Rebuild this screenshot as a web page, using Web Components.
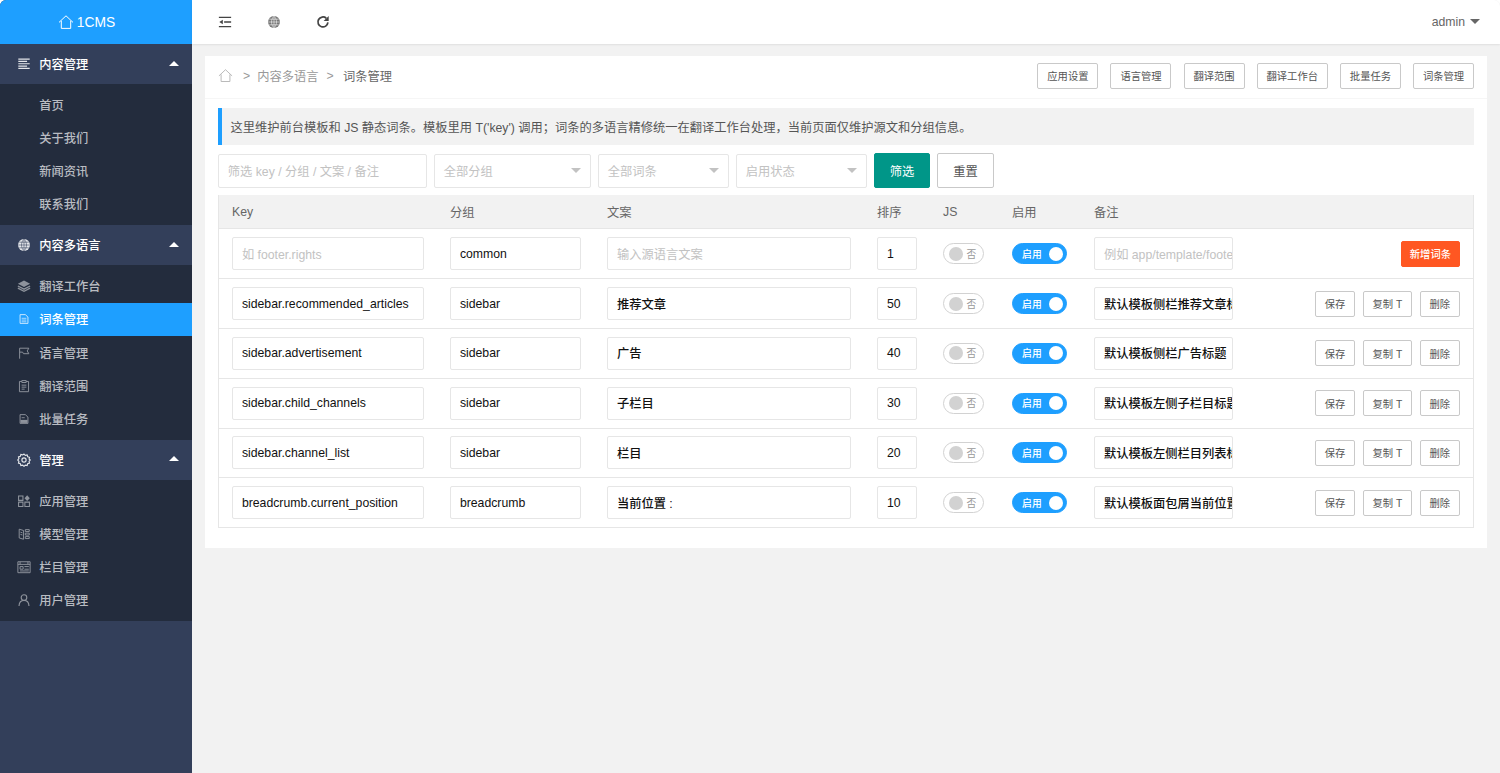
<!DOCTYPE html>
<html lang="zh">
<head>
<meta charset="utf-8">
<title>词条管理</title>
<style>
  html, body { margin: 0; height: 100%; background: #fff; }
  body {
    font-family: "Liberation Sans", "Noto Sans CJK SC", sans-serif;
    font-size: 12.25px;
    color: #666;
    overflow: hidden;
  }
</style>
</head>
<body>
<admin-app></admin-app>

<script>
const ICONS = {
  home: '<path d="M1 8.400 8 1.800l7 6.600M3.300 6.800v7.600h9.400V6.800" fill="none" stroke="currentColor" stroke-width="1"/>',
  lines: '<path d="M1.500 2.300h13M1.500 5h10M1.500 7.700h13M1.500 10.400h10M1.500 13.100h13" fill="none" stroke="currentColor" stroke-width="1.400"/>',
  globe: '<circle cx="8" cy="8" r="6.800" fill="currentColor"/><path d="M1.500 8h13M8 1.500v13M2.600 4.800h10.800M2.600 11.200h10.800M8 1.500c-3.800 3-3.800 10 0 13M8 1.500c3.800 3 3.800 10 0 13" fill="none" stroke="var(--grid, #fff)" stroke-opacity=".8" stroke-width=".8"/>',
  layers: '<path d="M8 1.800 15 5.400 8 9 1 5.400z" fill="currentColor"/><path d="M1 8 8 11.600 15 8M1 10.500 8 14.100l7-3.600" fill="none" stroke="currentColor" stroke-width="1.500"/>',
  doc: '<path d="M3.500 3h6l3 2.800V13h-9z" fill="none" stroke="currentColor" stroke-width="1.100"/><path d="M5.300 7.200h5.400M5.300 9.200h5.400M5.300 11.200h5.400" stroke="currentColor" stroke-width=".9"/>',
  batch: '<path d="M3.500 3h6l3 2.800V13h-9z" fill="none" stroke="currentColor" stroke-width="1.100"/><path d="M4 9h8v3.500H4z" fill="currentColor"/><path d="M5.300 6.500h3.500" stroke="currentColor" stroke-width="1"/>',
  flag: '<path d="M3 14.500V2.500h10.500L11.700 5.600l1.800 3.200H7.400L6.400 7H3" fill="none" stroke="currentColor" stroke-width="1.100"/>',
  clip: '<path d="M5.500 2.800H2.800v11.700h10.400V2.800h-2.700M5.500 1.800h5v2.200h-5zM5.300 7h5.400M5.300 9.300h5.400M5.300 11.600h3.400" fill="none" stroke="currentColor" stroke-width="1.100"/>',
  gear: '<circle cx="8" cy="8" r="2.400" fill="none" stroke="currentColor" stroke-width="1.300"/><path d="M8 1.200l1.500 1.500 2.100-.5.600 2.100 2.100.6-.5 2.100L15.200 8l-1.400 1.500.5 2.100-2.100.6-.6 2.100-2.100-.5L8 15.200l-1.500-1.400-2.100.5-.6-2.100-2.100-.6.500-2.100L.8 8l1.400-1.500-.5-2.100 2.100-.6.600-2.100 2.100.5z" fill="none" stroke="currentColor" stroke-width="1.300"/>',
  apps: '<path d="M1.800 2.300h5v5h-5zM1.800 9.300h5v5h-5zM9 9.300h5.200v5H9z" fill="none" stroke="currentColor" stroke-width="1.200"/><path d="M11.600 1.500 14.600 4.800l-3 3.300-3-3.300z" fill="currentColor"/>',
  model: '<path d="M2.500 2.500 7.500 4v10L2.500 12.500zM9.500 3h4.500v2.200H9.500zM9.500 7h4.500v2.200H9.500zM9.500 11h4.500v2.200H9.500zM4 6l2.200.600M4 8.500l2.200.600" fill="none" stroke="currentColor" stroke-width="1.100"/>',
  board: '<path d="M1 2h14v12.500H1zM1 5h14M3.500 7.500h3.500v3H3.500zM8.500 7.500h5M8.500 10.500h5M3.500 12.500h10M3.500 2v3M12.500 2v3" fill="none" stroke="currentColor" stroke-width="1.100"/>',
  user: '<circle cx="8" cy="5.200" r="3.200" fill="none" stroke="currentColor" stroke-width="1.300"/><path d="M2.300 14.800c.2-3.800 2.600-6.400 5.700-6.400s5.500 2.600 5.700 6.400" fill="none" stroke="currentColor" stroke-width="1.300"/>',
  shrink: '<path d="M1 2.800h14M7 8h8M1 13.200h14" fill="none" stroke="currentColor" stroke-width="1.500"/><path d="M5.500 5.300v5.400L1.500 8z" fill="currentColor"/>',
  refresh: '<path d="M13.600 8.500A5.700 5.700 0 1 1 11.700 3.700" fill="none" stroke="currentColor" stroke-width="2"/><path d="M14.500 1v5.800H8.700z" fill="currentColor"/>'
};

const icon = (name, size) =>
  `<svg viewBox="0 0 16 16" width="${size}" height="${size}" aria-hidden="true">${ICONS[name]}</svg>`;

class NavItem extends HTMLElement {
  connectedCallback() {
    const ic = this.getAttribute('icon');
    this.attachShadow({ mode: 'open' }).innerHTML = `
      <style>
        :host {
          display: flex;
          align-items: center;
          height: 33.2px;
          padding-left: 17px;
          color: #b9bcc2;
          font-size: 12.25px;
          font-weight: 500;
        }
        :host([active]) { background: #1e9fff; color: #fff; }
        .ic { width: 14px; height: 14px; margin-right: 8.2px; display: flex; color: #8e939c; }
        :host([active]) .ic { color: #cfe9ff; }
        svg { display: block; }
      </style>
      <span class="ic">${ic ? icon(ic, 14) : ''}</span><slot></slot>`;
  }
}
customElements.define('nav-item', NavItem);

class NavGroup extends HTMLElement {
  connectedCallback() {
    this.attachShadow({ mode: 'open' }).innerHTML = `
      <style>
        :host { display: block; --grid: #333f5a; }
        .head {
          display: flex;
          align-items: center;
          height: 40px;
          padding: 0 13px 0 17px;
          color: #fff;
          font-weight: 500;
          background: #333f5a;
        }
        .ic { width: 14px; height: 14px; margin-right: 8.2px; display: flex; color: #e4e6ea; }
        .title { flex: 1; }
        .caret {
          width: 0; height: 0;
          border: 5.6px solid transparent;
          border-top: 0;
          border-bottom: 5.6px solid #fff;
          margin-top: -2px;
        }
        .list { background: #232c3d; padding: 4.3px 0; }
      </style>
      <div class="head">
        <span class="ic">${icon(this.getAttribute('icon'), 14)}</span>
        <span class="title">${this.getAttribute('label')}</span>
        <span class="caret"></span>
      </div>
      <div class="list"><slot></slot></div>`;
  }
}
customElements.define('nav-group', NavGroup);

class SideBar extends HTMLElement {
  connectedCallback() {
    this.attachShadow({ mode: 'open' }).innerHTML = `
      <style>
        :host {
          display: flex;
          flex-direction: column;
          flex: none;
          width: 192px;
          background: #333f5a;
          border-top-left-radius: 6px;
          overflow: hidden;
        }
        .logo {
          display: flex;
          align-items: center;
          justify-content: center;
          gap: 3px;
          height: 44px;
          flex: none;
          padding-right: 19px;
          box-sizing: border-box;
          background: #1e9fff;
          color: #fff;
          font-size: 13.8px;
        }
      </style>
      <div class="logo">${icon('home', 16)}<span>1CMS</span></div>
      <slot></slot>`;
  }
}
customElements.define('side-bar', SideBar);

class TopBar extends HTMLElement {
  connectedCallback() {
    this.attachShadow({ mode: 'open' }).innerHTML = `
      <style>
        :host {
          display: flex;
          align-items: center;
          flex: none;
          height: 44px;
          padding: 0 20px 0 25.5px;
          background: #fff;
          box-sizing: border-box;
          box-shadow: 0 1px 2px rgba(0,0,0,.08);
          color: #444;
          border-top-right-radius: 6px;
        }
        .tools { display: flex; gap: 35px; flex: 1; }
        .tools svg { display: block; }
        .tools .g { color: #777; }
        .user { display: flex; align-items: center; gap: 5px; color: #666; }
        .caret { width: 0; height: 0; border: 5px solid transparent; border-bottom: 0; border-top: 5px solid #666; margin-top: -2px; }
      </style>
      <div class="tools">${icon('shrink', 14)}<span class="g">${icon('globe', 14)}</span>${icon('refresh', 14)}</div>
      <div class="user"><span>admin</span><span class="caret"></span></div>`;
  }
}
customElements.define('top-bar', TopBar);

class UiButton extends HTMLElement {
  connectedCallback() {
    this.attachShadow({ mode: 'open' }).innerHTML = `
      <style>
        :host {
          display: inline-flex;
          align-items: center;
          justify-content: center;
          box-sizing: border-box;
          height: 26px;
          padding: 0 8.9px;
          background: #fff;
          border: 1px solid #c9c9c9;
          border-radius: 2px;
          color: #555;
          font-size: 10.3px;
          white-space: nowrap;
          flex: none;
        }
        :host([kind="primary"]) {
          height: 35px; width: 56px; padding: 0;
          background: #009688; border-color: #009688; color: #fff; font-size: 12.25px;
        }
        :host([kind="big"]) { height: 35px; width: 57px; padding: 0; font-size: 12.25px; }
        :host([kind="add"]) { width: 59px; padding: 0; background: #ff5722; border-color: #ff5722; color: #fff; font-weight: 500; }
      </style>
      <slot></slot>`;
  }
}
customElements.define('ui-button', UiButton);

class UiField extends HTMLElement {
  connectedCallback() {
    const ph = this.hasAttribute('placeholder');
    this.attachShadow({ mode: 'open' }).innerHTML = `
      <style>
        :host {
          display: flex;
          align-items: center;
          box-sizing: border-box;
          height: 33px;
          padding-left: 8.8px;
          background: #fff;
          border: 1px solid #e6e6e6;
          border-radius: 2px;
          color: ${ph ? '#c2c2c2' : '#111'};
          font-weight: ${ph ? 400 : 500};
          font-size: 12.25px;
          overflow: hidden;
          white-space: nowrap;
          flex: none;
          position: relative;
        }
        .caret {
          position: absolute; right: 9px; top: 13px;
          width: 0; height: 0;
          border: 5.6px solid transparent; border-bottom: 0; border-top: 5.6px solid #c2c2c2;
        }
      </style>
      <slot></slot>${this.hasAttribute('select') ? '<span class="caret"></span>' : ''}`;
  }
}
customElements.define('ui-field', UiField);

class UiSwitch extends HTMLElement {
  connectedCallback() {
    const on = this.hasAttribute('on');
    this.attachShadow({ mode: 'open' }).innerHTML = `
      <style>
        :host {
          display: inline-flex;
          align-items: center;
          box-sizing: border-box;
          height: 21px;
          border-radius: 11px;
          font-size: 9.8px;
          width: ${on ? '55px' : '41px'};
          padding: 0 3.5px 0 4.5px;
          ${on ? 'background:#1e9fff;border:1px solid #1e9fff;color:#fff;padding-left:9px;justify-content:space-between;font-weight:500;'
               : 'background:#fff;border:1px solid #d2d2d2;color:#999;gap:4px;'}
        }
        i { width: 14px; height: 14px; border-radius: 50%; background: ${on ? '#fff' : '#d2d2d2'}; flex: none; }
      </style>
      ${on ? '<span>启用</span><i></i>' : '<i></i><span>否</span>'}`;
  }
}
customElements.define('ui-switch', UiSwitch);

const COLUMNS = '218px 157px 270px 66px 69px 82px 1fr';

class TermHead extends HTMLElement {
  connectedCallback() {
    const cells = ['Key', '分组', '文案', '排序', 'JS', '启用', '备注'];
    this.attachShadow({ mode: 'open' }).innerHTML = `
      <style>
        :host {
          display: grid;
          grid-template-columns: ${COLUMNS};
          height: 34.4px;
          align-items: center;
          background: #f2f2f2;
          color: #666;
          border-bottom: 1px solid #e6e6e6;
          box-sizing: border-box;
        }
        span { padding-left: 13.1px; }
      </style>
      ${cells.map(c => `<span>${c}</span>`).join('')}`;
  }
}
customElements.define('term-head', TermHead);

class TermRow extends HTMLElement {
  set data(d) { this._d = d; }
  connectedCallback() {
    const d = this._d;
    const field = (val, ph, w) =>
      `<ui-field style="width:${w}px" ${val ? '' : 'placeholder'}>${val || ph}</ui-field>`;
    this.attachShadow({ mode: 'open' }).innerHTML = `
      <style>
        :host {
          display: grid;
          grid-template-columns: ${COLUMNS};
          height: 49.8px;
          align-items: center;
          box-sizing: border-box;
          border-bottom: 1px solid #e6e6e6;
        }
        .c { padding-left: 13.1px; }
        .ops { display: flex; justify-content: flex-end; gap: 7.4px; padding-right: 13.1px; flex: 1; }
        .last { display: flex; align-items: center; }
      </style>
      <div class="c">${field(d.key, '如 footer.rights', 192)}</div>
      <div class="c">${field(d.group, '', 131)}</div>
      <div class="c">${field(d.text, '输入源语言文案', 244)}</div>
      <div class="c">${field(d.sort, '', 40)}</div>
      <div class="c"><ui-switch></ui-switch></div>
      <div class="c"><ui-switch on></ui-switch></div>
      <div class="c last">
        ${field(d.note, '例如 app/template/footer.html', 139)}
        <div class="ops">
          ${d.isNew
            ? '<ui-button kind="add">新增词条</ui-button>'
            : '<ui-button>保存</ui-button><ui-button>复制 T</ui-button><ui-button>删除</ui-button>'}
        </div>
      </div>`;
  }
}
customElements.define('term-row', TermRow);

class TermTable extends HTMLElement {
  connectedCallback() {
    const rows = [
      { isNew: true, key: '', group: 'common', text: '', sort: '1', note: '' },
      { key: 'sidebar.recommended_articles', group: 'sidebar', text: '推荐文章', sort: '50', note: '默认模板侧栏推荐文章标题' },
      { key: 'sidebar.advertisement', group: 'sidebar', text: '广告', sort: '40', note: '默认模板侧栏广告标题' },
      { key: 'sidebar.child_channels', group: 'sidebar', text: '子栏目', sort: '30', note: '默认模板左侧子栏目标题' },
      { key: 'sidebar.channel_list', group: 'sidebar', text: '栏目', sort: '20', note: '默认模板左侧栏目列表标题' },
      { key: 'breadcrumb.current_position', group: 'breadcrumb', text: '当前位置 :', sort: '10', note: '默认模板面包屑当前位置' }
    ];
    const root = this.attachShadow({ mode: 'open' });
    root.innerHTML = `
      <style>
        :host { display: block; border: 1px solid #e6e6e6; border-width: 0 1px; margin-top: 7px; }
      </style>
      <term-head></term-head>`;
    rows.forEach(r => {
      const el = document.createElement('term-row');
      el.data = r;
      root.appendChild(el);
    });
  }
}
customElements.define('term-table', TermTable);

class AdminApp extends HTMLElement {
  connectedCallback() {
    const tabs = ['应用设置', '语言管理', '翻译范围', '翻译工作台', '批量任务', '词条管理'];
    this.attachShadow({ mode: 'open' }).innerHTML = `
      <style>
        :host { display: flex; height: 773px; overflow: hidden; }
        main {
          flex: 1; display: flex; flex-direction: column; min-width: 0;
          background: #f2f2f2;
          border-top-right-radius: 6px;
        }
        .card {
          margin: 12px 13px 0;
          background: #fff;
          padding-bottom: 20px;
        }
        .crumb {
          display: flex;
          align-items: center;
          height: 43px;
          padding: 0 13px 3px;
          box-sizing: border-box;
          border-bottom: 1px solid #f6f6f6;
          color: #999;
        }
        .crumb svg { color: #b5b5b5; margin-right: 10px; display: block; }
        .crumb .sep { margin-right: 7px; }
        .crumb .mid { margin-right: 8px; }
        .crumb b { font-weight: normal; color: #666; flex: 1; margin-left: 2.5px; }
        .tabs { display: flex; gap: 12.1px; }
        .body { padding: 9px 13px 0; }
        .notice {
          height: 37px;
          display: flex;
          align-items: center;
          box-sizing: border-box;
          padding-left: 8.5px;
          background: #f2f2f2;
          border-left: 4.7px solid #1e9fff;
          color: #555;
        }
        .filters { display: flex; align-items: center; gap: 7px; margin-top: 8px; }
        .filters ui-field { height: 34px; }
      </style>
      <side-bar>
        <nav-group icon="lines" label="内容管理">
          <nav-item>首页</nav-item>
          <nav-item>关于我们</nav-item>
          <nav-item>新闻资讯</nav-item>
          <nav-item>联系我们</nav-item>
        </nav-group>
        <nav-group icon="globe" label="内容多语言">
          <nav-item icon="layers">翻译工作台</nav-item>
          <nav-item icon="doc" active>词条管理</nav-item>
          <nav-item icon="flag">语言管理</nav-item>
          <nav-item icon="clip">翻译范围</nav-item>
          <nav-item icon="batch">批量任务</nav-item>
        </nav-group>
        <nav-group icon="gear" label="管理">
          <nav-item icon="apps">应用管理</nav-item>
          <nav-item icon="model">模型管理</nav-item>
          <nav-item icon="board">栏目管理</nav-item>
          <nav-item icon="user">用户管理</nav-item>
        </nav-group>
      </side-bar>
      <main>
        <top-bar></top-bar>
        <section class="card">
          <div class="crumb">
            ${icon('home', 15)}
            <span class="sep">&gt;</span><span class="mid">内容多语言</span>
            <span class="sep">&gt;</span><b>词条管理</b>
            <div class="tabs">${tabs.map(t => `<ui-button>${t}</ui-button>`).join('')}</div>
          </div>
          <div class="body">
            <div class="notice">这里维护前台模板和 JS 静态词条。模板里用 T('key') 调用；词条的多语言精修统一在翻译工作台处理，当前页面仅维护源文和分组信息。</div>
            <div class="filters">
              <ui-field placeholder style="width:209px">筛选 key / 分组 / 文案 / 备注</ui-field>
              <ui-field placeholder select style="width:157px">全部分组</ui-field>
              <ui-field placeholder select style="width:131px">全部词条</ui-field>
              <ui-field placeholder select style="width:131px">启用状态</ui-field>
              <ui-button kind="primary">筛选</ui-button>
              <ui-button kind="big">重置</ui-button>
            </div>
            <term-table></term-table>
          </div>
        </section>
      </main>`;
  }
}
customElements.define('admin-app', AdminApp);
</script>
</body>
</html>
